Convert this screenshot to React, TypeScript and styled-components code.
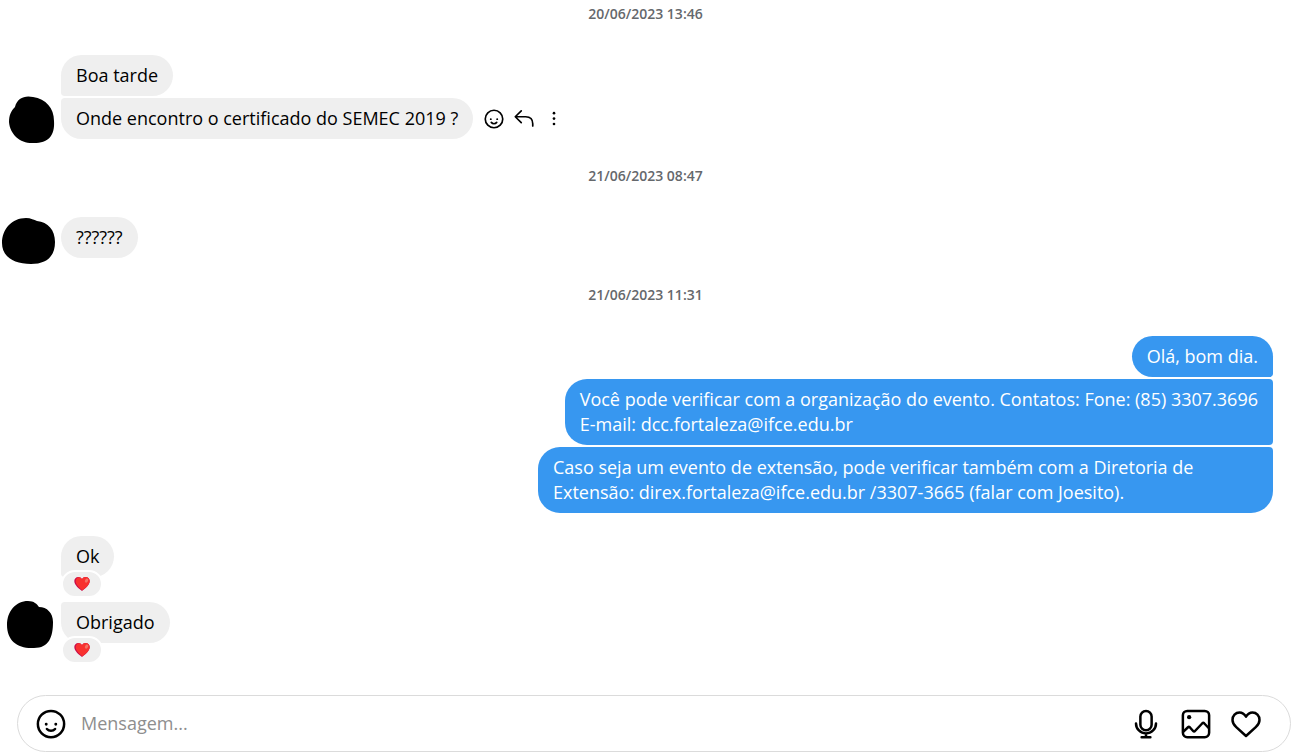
import React from "react";
import styled, { createGlobalStyle, css } from "styled-components";

const GlobalStyle = createGlobalStyle`
  * { box-sizing: border-box; }
  body {
    margin: 0;
    background: #fff;
    color: #000;
    font-family: "Segoe UI", "Open Sans", "Noto Sans", sans-serif;
    font-size: 18px;
    line-height: 25px;
  }
`;

const Page = styled.main`
  display: flex;
  flex-direction: column;
  min-height: 100vh;
  padding-bottom: 4px;
`;

const Thread = styled.section`
  display: flex;
  flex-direction: column;
  flex: 1;
  padding-right: 18px;
`;

const Stamp = styled.time`
  display: block;
  padding: 4px 0 4px 18px;
  color: #65686c;
  font-size: 14px;
  font-weight: 600;
  line-height: 20px;
  text-align: center;
`;

const Group = styled.div<{ $reacted?: boolean }>`
  display: flex;
  flex-direction: column;
  gap: ${(p) => (p.$reacted ? 4 : 2)}px;
  padding: ${(p) => (p.$reacted ? "0 0 31px" : "27px 0 23px")};
`;

const Row = styled.div<{ $own?: boolean }>`
  display: flex;
  align-items: center;
  justify-content: ${(p) => (p.$own ? "flex-end" : "flex-start")};
  padding-left: ${(p) => (p.$own ? 48 : 0)}px;
`;

const AvatarSlot = styled.svg`
  flex: none;
  align-self: flex-start;
  width: 61px;
  height: 41px;
  overflow: visible;
`;

type Place = "single" | "first" | "middle" | "last";

const incomingRadius: Record<Place, string> = {
  single: "22px",
  first: "22px 22px 22px 4px",
  middle: "4px 22px 22px 4px",
  last: "4px 22px 22px 22px",
};

const ownRadius: Record<Place, string> = {
  single: "22px",
  first: "22px 22px 4px 22px",
  middle: "22px 4px 4px 22px",
  last: "22px 4px 22px 22px",
};

const Bubble = styled.p<{ $own?: boolean; $place: Place }>`
  max-width: 60%;
  margin: 0;
  padding: 8px 15px;
  white-space: pre-line;
  ${(p) =>
    p.$own
      ? css`
          background: #3797f0;
          color: #fff;
          border-radius: ${ownRadius[p.$place]};
        `
      : css`
          background: #efefef;
          border-radius: ${incomingRadius[p.$place]};
        `}
`;

const Actions = styled.div`
  display: flex;
  align-items: center;
  gap: 10px;
  margin-left: 11px;
`;

const IconButton = styled.button<{ $size: number }>`
  display: flex;
  flex: none;
  width: ${(p) => p.$size}px;
  height: ${(p) => p.$size}px;
  padding: 0;
  border: 0;
  background: none;
  color: #000;
  cursor: pointer;

  svg {
    width: 100%;
    height: 100%;
  }
`;

const Reaction = styled.button`
  position: relative;
  display: flex;
  align-items: center;
  justify-content: center;
  width: 42px;
  height: 28px;
  margin: -7px 0 0 61px;
  padding: 0;
  border: 2px solid #fff;
  border-radius: 14px;
  background: #efefef;
  cursor: pointer;
`;

const Composer = styled.form`
  display: flex;
  align-items: center;
  gap: 15px;
  height: 57px;
  margin-left: 17px;
  padding: 0 29px 0 18px;
  border: 1px solid #dbdbdb;
  border-radius: 29px;
`;

const Tools = styled.div`
  display: flex;
  gap: 20px;
`;

const MessageInput = styled.input`
  flex: 1;
  min-width: 0;
  padding: 0;
  border: 0;
  outline: 0;
  background: none;
  font: inherit;

  &::placeholder {
    color: #8e8e8e;
    opacity: 1;
  }
`;

const blobs = {
  a: "M15 9C17 0 25-3 33-1C46 1 54 10 54 23C55 38 48 45 34 45C21 46 10 37 9 24C9 17 11 13 15 9Z",
  b: "M2 26C2 12 12 1 26 1C31 1 34 3 37 4C48 5 55 13 55 25C55 40 46 47 31 47C14 47 2 40 2 26Z",
  c: "M7 23C7 9 16-1 28-1C34-1 37 2 39 5C47 5 53 11 53 20C53 35 49 46 34 46C18 47 7 39 7 23Z",
};

const Avatar = ({ shape }: { shape?: keyof typeof blobs }) => (
  <AvatarSlot viewBox="0 0 61 41" aria-hidden="true">
    {shape && <path d={blobs[shape]} />}
  </AvatarSlot>
);

const Smile = () => (
  <svg viewBox="0 0 24 24" aria-hidden="true">
    <path d="M15.83 10.997a1.167 1.167 0 1 0 1.167 1.167 1.167 1.167 0 0 0-1.167-1.167Zm-6.5 1.167a1.167 1.167 0 1 0-1.166 1.167 1.167 1.167 0 0 0 1.166-1.167Zm5.163 3.24a3.406 3.406 0 0 1-4.982.007 1 1 0 1 0-1.557 1.256 5.397 5.397 0 0 0 8.09 0 1 1 0 0 0-1.55-1.263ZM12 .503a11.5 11.5 0 1 0 11.5 11.5A11.513 11.513 0 0 0 12 .503Zm0 21a9.5 9.5 0 1 1 9.5-9.5 9.51 9.51 0 0 1-9.5 9.5Z" />
  </svg>
);

const Reply = () => (
  <svg viewBox="0 0 24 24" fill="none" stroke="currentColor" strokeWidth="2" strokeLinecap="round" strokeLinejoin="round" aria-hidden="true">
    <path d="M8.7 2.3 1.5 9.3l7.2 7M1.5 9.3H14c5.5 0 8.5 3.5 8.5 8.5v2.5" />
  </svg>
);

const Dots = () => (
  <svg viewBox="0 0 24 24" aria-hidden="true">
    <circle cx="12" cy="5" r="1.6" />
    <circle cx="12" cy="11.5" r="1.6" />
    <circle cx="12" cy="18" r="1.6" />
  </svg>
);

const Mic = () => (
  <svg viewBox="0 0 24 24" fill="none" stroke="currentColor" strokeWidth="2" strokeLinecap="round" strokeLinejoin="round" aria-hidden="true">
    <rect x="7.5" y="1.5" width="9" height="15.5" rx="4.5" />
    <path d="M4 11.5a8 8 0 0 0 16 0M12 19.5v3M8.5 22.5h7" />
  </svg>
);

const Picture = () => (
  <svg viewBox="0 0 24 24" fill="none" stroke="currentColor" strokeWidth="2" strokeLinejoin="round" aria-hidden="true">
    <rect x="1.5" y="1.5" width="21" height="21" rx="3.5" />
    <circle cx="6.5" cy="6.5" r="1.7" fill="currentColor" stroke="none" />
    <path d="M1.5 18.5 5.6 14.6a1 1 0 0 1 1.4 0l2.7 3a1 1 0 0 0 1.5 0l5.9-6.2a1 1 0 0 1 1.4 0l4 4.2" />
  </svg>
);

const Heart = () => (
  <svg viewBox="0 0 24 24" fill="none" stroke="currentColor" strokeWidth="2" strokeLinejoin="round" aria-hidden="true">
    <path d="M17.2 2.8c3.2 0 5.6 2.5 5.6 5.9 0 2.6-1.2 4.1-3 5.8L12 21.6l-7.8-7.1c-1.8-1.7-3-3.2-3-5.8 0-3.4 2.4-5.9 5.6-5.9 2.2 0 3.8 1 5.2 3.3 1.4-2.3 3-3.3 5.2-3.3Z" />
  </svg>
);

const RedHeart = () => (
  <svg width="16" height="14" viewBox="0 0 16 14" aria-hidden="true">
    <path fill="#ca0b4a" d="M4.3 0C6 0 7.3.8 8 2.2 8.7.8 10 0 11.7 0 14 0 15.7 1.7 15.7 4c0 4-4.7 7.7-7.7 10C5 11.7.3 8 .3 4 .3 1.7 2 0 4.3 0Z" />
    <path fill="#f8312f" d="M5.3.2C6.7.3 7.5 1.2 8 2.2 8.7.8 10 0 11.7 0 14 0 15.7 1.7 15.7 4c0 4-4.7 7.4-7.3 9.3C5.7 11.3 1.7 7.8 1.7 4c0-2 1.4-3.7 3.6-3.8Z" />
    <ellipse cx="12.6" cy="3.6" rx="1.5" ry="2.2" fill="#f37366" transform="rotate(30 12.6 3.6)" />
  </svg>
);

export default function App() {
  return (
    <>
      <GlobalStyle />
      <Page>
        <Thread>
          <Stamp>20/06/2023 13:46</Stamp>
          <Group>
            <Row>
              <Avatar />
              <Bubble $place="first">Boa tarde</Bubble>
            </Row>
            <Row>
              <Avatar shape="a" />
              <Bubble $place="last">Onde encontro o certificado do SEMEC 2019 ?</Bubble>
              <Actions>
                <IconButton $size={20} type="button" aria-label="Reagir"><Smile /></IconButton>
                <IconButton $size={20} type="button" aria-label="Responder"><Reply /></IconButton>
                <IconButton $size={20} type="button" aria-label="Mais"><Dots /></IconButton>
              </Actions>
            </Row>
          </Group>

          <Stamp>21/06/2023 08:47</Stamp>
          <Group>
            <Row>
              <Avatar shape="b" />
              <Bubble $place="single">??????</Bubble>
            </Row>
          </Group>

          <Stamp>21/06/2023 11:31</Stamp>
          <Group>
            <Row $own>
              <Bubble $own $place="first">Olá, bom dia.</Bubble>
            </Row>
            <Row $own>
              <Bubble $own $place="middle">
                {"Você pode verificar com a organização do evento. Contatos: Fone: (85) 3307.3696\nE-mail: dcc.fortaleza@ifce.edu.br"}
              </Bubble>
            </Row>
            <Row $own>
              <Bubble $own $place="last">
                Caso seja um evento de extensão, pode verificar também com a Diretoria de Extensão: direx.fortaleza@ifce.edu.br /3307-3665 (falar com Joesito).
              </Bubble>
            </Row>
          </Group>

          <Group $reacted>
            <div>
              <Row>
                <Avatar />
                <Bubble $place="first">Ok</Bubble>
              </Row>
              <Reaction type="button" aria-label="Reação"><RedHeart /></Reaction>
            </div>
            <div>
              <Row>
                <Avatar shape="c" />
                <Bubble $place="last">Obrigado</Bubble>
              </Row>
              <Reaction type="button" aria-label="Reação"><RedHeart /></Reaction>
            </div>
          </Group>
        </Thread>

        <Composer>
          <IconButton $size={30} type="button" aria-label="Escolher emoji"><Smile /></IconButton>
          <MessageInput type="text" placeholder="Mensagem..." aria-label="Mensagem" />
          <Tools>
            <IconButton $size={30} type="button" aria-label="Mensagem de voz"><Mic /></IconButton>
            <IconButton $size={30} type="button" aria-label="Adicionar foto"><Picture /></IconButton>
            <IconButton $size={30} type="button" aria-label="Curtir"><Heart /></IconButton>
          </Tools>
        </Composer>
      </Page>
    </>
  );
}
